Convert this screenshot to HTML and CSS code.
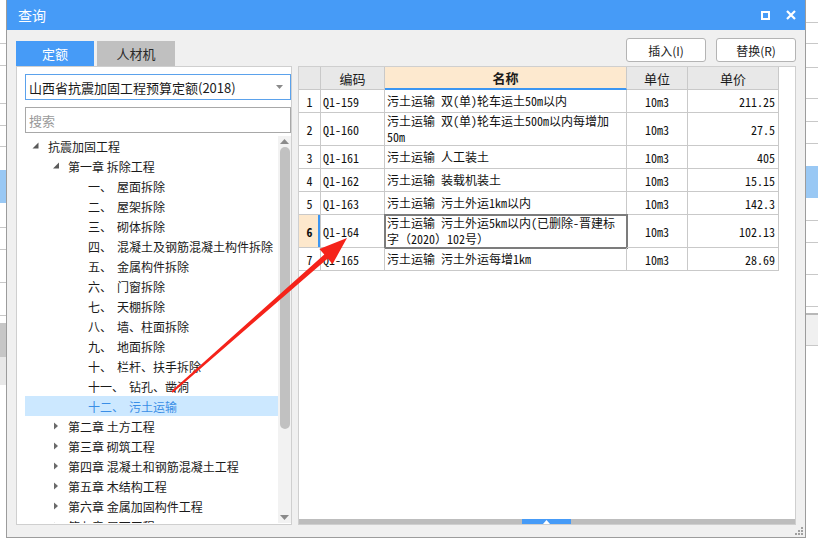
FILE: index.html
```html
<!DOCTYPE html>
<html lang="zh">
<head>
<meta charset="utf-8">
<title>查询</title>
<link rel="stylesheet" href="styles.css">
</head>
<body>
<div class="desk">
  <div class="bg-left"></div>
  <div class="dialog">
    <div class="titlebar">
      <span class="title">查询</span>
      <span class="win-icons">
        <svg class="ico-max" width="9" height="9" viewBox="0 0 9 9"><rect x="1" y="1" width="7" height="7" fill="none" stroke="#fff" stroke-width="2"/></svg>
        <svg class="ico-close" width="10" height="10" viewBox="0 0 10 10"><path d="M1 1L9 9M9 1L1 9" stroke="#fff" stroke-width="2.2" fill="none"/></svg>
      </span>
    </div>
    <div class="body">
      <div class="toolbar">
        <div class="tabs">
          <div class="tab active">定额</div>
          <div class="tab">人材机</div>
        </div>
        <div class="buttons">
          <button class="btn">插入(I)</button>
          <button class="btn">替换(R)</button>
        </div>
      </div>
      <div class="panels">
        <div class="left-panel">
          <div class="combo">
            <span class="combo-text">山西省抗震加固工程预算定额(2018)</span>
            <svg class="combo-arrow" width="7" height="4" viewBox="0 0 7 4"><path d="M0 0H7L3.5 4Z" fill="#8a8a8a"/></svg>
          </div>
          <div class="search">搜索</div>
          <div class="tree">
            <div class="tree-rows">
              <div class="node lv0"><span class="twisty"><svg width="8" height="8" viewBox="0 0 8 8"><path d="M6.5 0.5V6.5H0.5Z" fill="#5a5a5a"/></svg></span><span>抗震加固工程</span></div>
              <div class="node lv1"><span class="twisty"><svg width="8" height="8" viewBox="0 0 8 8"><path d="M7 0.5V6.5H1Z" fill="#5a5a5a"/></svg></span><span>第一章 拆除工程</span></div>
              <div class="node lv2"><span class="twisty"></span><span class="num">一、</span><span>屋面拆除</span></div>
              <div class="node lv2"><span class="twisty"></span><span class="num">二、</span><span>屋架拆除</span></div>
              <div class="node lv2"><span class="twisty"></span><span class="num">三、</span><span>砌体拆除</span></div>
              <div class="node lv2"><span class="twisty"></span><span class="num">四、</span><span>混凝土及钢筋混凝土构件拆除</span></div>
              <div class="node lv2"><span class="twisty"></span><span class="num">五、</span><span>金属构件拆除</span></div>
              <div class="node lv2"><span class="twisty"></span><span class="num">六、</span><span>门窗拆除</span></div>
              <div class="node lv2"><span class="twisty"></span><span class="num">七、</span><span>天棚拆除</span></div>
              <div class="node lv2"><span class="twisty"></span><span class="num">八、</span><span>墙、柱面拆除</span></div>
              <div class="node lv2"><span class="twisty"></span><span class="num">九、</span><span>地面拆除</span></div>
              <div class="node lv2"><span class="twisty"></span><span class="num">十、</span><span>栏杆、扶手拆除</span></div>
              <div class="node lv2"><span class="twisty"></span><span class="num">十一、</span><span>钻孔、凿洞</span></div>
              <div class="node lv2 selected"><span class="twisty"></span><span class="num">十二、</span><span>污土运输</span></div>
              <div class="node lv1"><span class="twisty"><svg width="8" height="8" viewBox="0 0 8 8"><path d="M2 0.5L6 4L2 7.5Z" fill="#6a6a6a"/></svg></span><span>第二章 土方工程</span></div>
              <div class="node lv1"><span class="twisty"><svg width="8" height="8" viewBox="0 0 8 8"><path d="M2 0.5L6 4L2 7.5Z" fill="#6a6a6a"/></svg></span><span>第三章 砌筑工程</span></div>
              <div class="node lv1"><span class="twisty"><svg width="8" height="8" viewBox="0 0 8 8"><path d="M2 0.5L6 4L2 7.5Z" fill="#6a6a6a"/></svg></span><span>第四章 混凝土和钢筋混凝土工程</span></div>
              <div class="node lv1"><span class="twisty"><svg width="8" height="8" viewBox="0 0 8 8"><path d="M2 0.5L6 4L2 7.5Z" fill="#6a6a6a"/></svg></span><span>第五章 木结构工程</span></div>
              <div class="node lv1"><span class="twisty"><svg width="8" height="8" viewBox="0 0 8 8"><path d="M2 0.5L6 4L2 7.5Z" fill="#6a6a6a"/></svg></span><span>第六章 金属加固构件工程</span></div>
              <div class="node lv1"><span class="twisty"><svg width="8" height="8" viewBox="0 0 8 8"><path d="M2 0.5L6 4L2 7.5Z" fill="#6a6a6a"/></svg></span><span>第七章 屋面工程</span></div>
            </div>
            <div class="vscroll">
              <svg class="sarrow" width="9" height="5" viewBox="0 0 9 5"><path d="M0 5H9L4.5 0Z" fill="#8a8a8a"/></svg>
              <div class="vthumb"></div>
              <div class="vtrack"></div>
              <svg class="sarrow" width="9" height="5" viewBox="0 0 9 5"><path d="M0 0H9L4.5 5Z" fill="#8a8a8a"/></svg>
            </div>
          </div>
        </div>
        <div class="right-panel">
          <div class="grid-area">
            <div class="grid">
              <div class="c h rn"></div>
              <div class="c h">编码</div>
              <div class="c h hsel">名称</div>
              <div class="c h">单位</div>
              <div class="c h">单价</div>

              <div class="c rn m">1</div><div class="c m code">Q1-159</div><div class="c m name">污土运输 双(单)轮车运土50m以内</div><div class="c m unit">10m3</div><div class="c m price">211.25</div>
              <div class="c rn m">2</div><div class="c m code">Q1-160</div><div class="c m name">污土运输 双(单)轮车运土500m以内每增加<br>50m</div><div class="c m unit">10m3</div><div class="c m price">27.5</div>
              <div class="c rn m">3</div><div class="c m code">Q1-161</div><div class="c m name">污土运输 人工装土</div><div class="c m unit">10m3</div><div class="c m price">405</div>
              <div class="c rn m">4</div><div class="c m code">Q1-162</div><div class="c m name">污土运输 装载机装土</div><div class="c m unit">10m3</div><div class="c m price">15.15</div>
              <div class="c rn m">5</div><div class="c m code">Q1-163</div><div class="c m name">污土运输 污土外运1km以内</div><div class="c m unit">10m3</div><div class="c m price">142.3</div>
              <div class="c rn m cur">6</div><div class="c m code">Q1-164</div><div class="c m name focus">污土运输 污土外运5km以内(已删除-晋建标<br>字（2020）102号）</div><div class="c m unit">10m3</div><div class="c m price">102.13</div>
              <div class="c rn m">7</div><div class="c m code">Q1-165</div><div class="c m name">污土运输 污土外运每增1km</div><div class="c m unit">10m3</div><div class="c m price">28.69</div>
            </div>
          </div>
          <div class="hscroll"><div class="hthumb"><svg width="7" height="4" viewBox="0 0 7 4"><path d="M0 4H7L3.5 0Z" fill="#fff"/></svg></div></div>
        </div>
      </div>
      <div class="footer">
        <svg class="grip" width="8" height="8" viewBox="0 0 8 8" fill="#a0a0a0">
          <rect x="6" y="0" width="2" height="2"/>
          <rect x="3" y="3" width="2" height="2"/><rect x="6" y="3" width="2" height="2"/>
          <rect x="0" y="6" width="2" height="2"/><rect x="3" y="6" width="2" height="2"/><rect x="6" y="6" width="2" height="2"/>
        </svg>
      </div>
    </div>
  </div>
  <div class="bg-right"></div>
  <svg class="arrow" width="818" height="538" viewBox="0 0 818 538">
    <polygon points="171.3,391.2 324.3,254.6 319.4,249 347,238 332.6,264 327.7,258.4 172.7,392.8" fill="#f5231a"/>
  </svg>
</div>
</body>
</html>
```

FILE: styles.css
```css
* { box-sizing: border-box; }
html, body { margin: 0; padding: 0; }
body {
  width: 818px;
  height: 538px;
  overflow: hidden;
  background: #fff;
  color: #1a1a1a;
  font-family: "Noto Sans CJK SC", "Microsoft YaHei", sans-serif;
  font-size: 12px;
}
.desk {
  position: relative;
  display: flex;
  height: 538px;
}
.bg-left {
  width: 6px;
  background: linear-gradient(to bottom,
    #fff 0 43px, #c8c8c8 43px 44px, #fff 44px 65px, #c8c8c8 65px 66px,
    #fff 66px 103px, #c8c8c8 103px 104px, #fff 104px 125px, #c8c8c8 125px 126px,
    #fff 126px 146px, #c8c8c8 146px 147px, #fff 147px 170px, #99c8f4 170px 203px,
    #fff 203px 227px, #c8c8c8 227px 228px, #fff 228px 249px, #c8c8c8 249px 250px,
    #fff 250px 282px, #c8c8c8 282px 283px, #fff 283px 315px, #c8c8c8 315px 316px,
    #fff 316px 323px, #c6c6c6 323px 357px, #e8e8e8 357px 385px, #fff 385px 538px);
}
.bg-right {
  width: 12px;
  background: linear-gradient(to bottom,
    #fff 0 22px, #c8c8c8 22px 23px, #fff 23px 43px, #c8c8c8 43px 44px,
    #fff 44px 67px, #c8c8c8 67px 68px, #fff 68px 98px, #c8c8c8 98px 99px,
    #fff 99px 121px, #c8c8c8 121px 122px, #fff 122px 143px, #c8c8c8 143px 144px,
    #fff 144px 166px, #99c8f4 166px 198px, #fff 198px 220px, #c8c8c8 220px 221px,
    #fff 221px 242px, #c8c8c8 242px 243px, #fff 243px 274px, #c8c8c8 274px 275px,
    #fff 275px 306px, #c8c8c8 306px 307px, #fff 307px 313px, #b8b8b8 313px 315px,
    #f0f0f0 315px 345px, #c8c8c8 345px 346px, #fff 346px 538px);
}
.dialog {
  width: 800px;
  height: 538px;
  display: flex;
  flex-direction: column;
  background: #f0f0f0;
  border: 1px solid #9c9c9c;
  border-top: none;
}
.titlebar {
  height: 30px;
  flex: none;
  background: #469bf7;
  color: #fff;
  display: flex;
  align-items: center;
  justify-content: space-between;
  padding: 0 9px 0 11px;
}
.title { font-size: 14px; }
.win-icons { display: flex; align-items: center; gap: 16px; }
.win-icons svg { display: block; }
.body {
  flex: 1;
  display: flex;
  flex-direction: column;
  padding: 8px 9px 0 9px;
}
.toolbar {
  height: 28px;
  flex: none;
  display: flex;
  justify-content: space-between;
}
.tabs { display: flex; gap: 3px; align-self: flex-end; }
.tab {
  width: 78px;
  height: 25px;
  display: flex;
  align-items: center;
  justify-content: center;
  background: #c0c0c0;
  color: #2a2a2a;
  font-size: 13px;
}
.tab.active { background: #469bf7; color: #fff; }
.buttons { display: flex; gap: 10px; align-self: flex-start; }
.btn {
  width: 80px;
  height: 24px;
  padding: 0;
  background: #fff;
  border: 1px solid #b4b4b4;
  border-radius: 3px;
  font-family: "Noto Sans CJK SC", sans-serif;
  font-size: 12px;
  color: #222;
}
.panels {
  height: 459px;
  flex: none;
  display: flex;
  gap: 6px;
}
.left-panel {
  width: 276px;
  background: #fff;
  border: 1px solid #cfcfcf;
  display: flex;
  flex-direction: column;
}
.combo {
  margin: 7px 0 0 8px;
  height: 26px;
  border: 1px solid #5ba2ec;
  display: flex;
  align-items: center;
  justify-content: space-between;
  padding: 0 7px 0 3px;
  font-size: 13px;
  color: #1a1a1a;
}
.combo-arrow { display: block; }
.search {
  margin: 7px 0 0 8px;
  height: 26px;
  border: 1px solid #a8a8a8;
  display: flex;
  align-items: center;
  padding-left: 3px;
  color: #9a9a9a;
  font-size: 13px;
}
.tree {
  flex: 1;
  margin: 3px 0 1px 8px;
  display: flex;
  overflow: hidden;
}
.tree-rows {
  flex: 1;
  overflow: hidden;
  min-width: 0;
}
.node {
  height: 20px;
  display: flex;
  align-items: center;
  white-space: nowrap;
  font-size: 12px;
  color: #1a1a1a;
}
.node.lv0 { padding-left: 6px; }
.node.lv1 { padding-left: 26px; }
.node.lv2 { padding-left: 46px; }
.twisty {
  width: 12px;
  margin-right: 5px;
  display: flex;
  align-items: center;
}
.twisty svg { display: block; margin-left: 1px; }
.num { margin-right: 5px; }
.node.selected { background: #cce8ff; color: #3a8ee6; }
.vscroll {
  width: 13px;
  flex: none;
  background: #f2f2f2;
  display: flex;
  flex-direction: column;
  align-items: center;
  padding: 3px 0 3px;
}
.sarrow { display: block; flex: none; }
.vthumb {
  width: 10px;
  height: 282px;
  margin-top: 3px;
  background: #c1c1c1;
  border-radius: 5px;
  flex: none;
}
.vtrack { flex: 1; }
.right-panel {
  flex: 1;
  background: #fff;
  border: 1px solid #cfcfcf;
  display: flex;
  flex-direction: column;
}
.grid-area { flex: 1; overflow: hidden; }
.grid {
  display: grid;
  grid-template-columns: 22px 64px 242px 61px 91px;
  grid-template-rows: 23px 23px 33px 23px 23px 23px 33px 23px;
  width: 480px;
}
.c {
  border-right: 1px solid #c9c9c9;
  border-bottom: 1px solid #c9c9c9;
  display: flex;
  align-items: center;
  white-space: nowrap;
  overflow: hidden;
}
.h {
  background: #e8e8e8;
  justify-content: center;
  font-size: 13px;
  color: #1a1a1a;
}
.h.hsel {
  background: #fde9cf;
  font-weight: bold;
  border-bottom: 2px solid #3c96f2;
}
.m {
  font-family: "Noto Sans Mono CJK SC", "Liberation Mono", "Noto Sans CJK SC", monospace;
  font-size: 12px;
  color: #111;
}
.rn { justify-content: center; }
.rn.h { background: #e8e8e8; }
.rn.cur {
  background: #fde8cc;
  font-weight: bold;
  box-shadow: inset -2px 0 0 #3c96f2;
}
.code { padding-left: 2px; }
.name { padding-left: 2px; line-height: 16px; }
.name.focus { outline: 2px solid #7c7c7c; outline-offset: -1px; }
.unit { justify-content: center; }
.price { justify-content: flex-end; padding-right: 3px; }
.hscroll {
  height: 5px;
  flex: none;
  background: #bdbdbd;
  display: flex;
  justify-content: center;
}
.hthumb {
  width: 49px;
  height: 5px;
  margin-left: -1px;
  background: #469bf7;
  display: flex;
  justify-content: center;
  align-items: flex-end;
}
.hthumb svg { display: block; }
.footer {
  flex: 1;
  display: flex;
  justify-content: flex-end;
  align-items: flex-end;
  padding-bottom: 2px;
  margin-right: -7px;
}
.grip { display: block; }
.arrow {
  position: absolute;
  left: 0;
  top: 0;
  pointer-events: none;
}
```
